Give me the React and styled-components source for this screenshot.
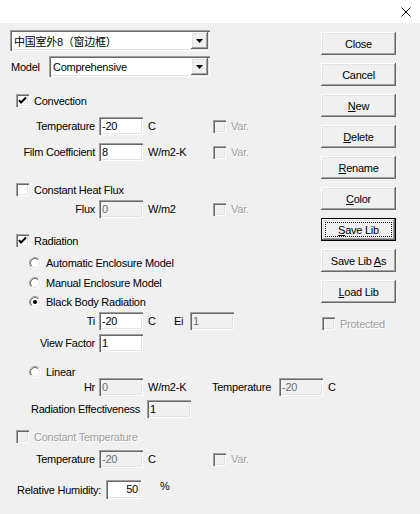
import { useId } from "react";
import styled, { createGlobalStyle } from "styled-components";

const GlobalStyle = createGlobalStyle`
  html, body {
    margin: 0;
    padding: 0;
    background: #f0f0f0;
  }
  body {
    font-family: "Liberation Sans", Arial, "Noto Sans CJK SC", sans-serif;
    font-size: 11px;
    letter-spacing: -0.25px;
    color: #000;
  }
`;

const sunken = `box-shadow: inset 1px 1px #a0a0a0, inset 2px 2px #696969, inset -1px -1px #fff, inset -2px -2px #e3e3e3;`;
const raised = `box-shadow: inset -1px -1px #696969, inset 1px 1px #fff, inset -2px -2px #a0a0a0, inset 2px 2px #e3e3e3;`;

const CheckMark = () => (
  <svg width="9" height="9" viewBox="0 0 9 9">
    <polyline points="1,4 3,6.5 8,1.5" fill="none" stroke="#000" strokeWidth="2" />
  </svg>
);

const Radio = ({ on }) => {
  const id = useId().replace(/:/g, "");
  return (
    <svg width="12" height="12" viewBox="0 0 12 12" style={{ flexShrink: 0 }}>
      <defs>
        <linearGradient id={`o${id}`} x1="0" y1="0" x2="1" y2="1">
          <stop offset="0.5" stopColor="#a0a0a0" />
          <stop offset="0.5" stopColor="#ffffff" />
        </linearGradient>
        <linearGradient id={`i${id}`} x1="0" y1="0" x2="1" y2="1">
          <stop offset="0.5" stopColor="#696969" />
          <stop offset="0.5" stopColor="#e3e3e3" />
        </linearGradient>
      </defs>
      <circle cx="6" cy="6" r="5.5" fill="none" stroke={`url(#o${id})`} strokeWidth="1" />
      <circle cx="6" cy="6" r="4.5" fill="#fff" stroke={`url(#i${id})`} strokeWidth="1" />
      {on && <circle cx="6" cy="6" r="2" fill="#000" />}
    </svg>
  );
};

const Check = ({ on, disabled }) => (
  <Box $disabled={disabled}>{on && <CheckMark />}</Box>
);

const Combo = ({ width, children }) => (
  <ComboBox $width={width}>
    <ComboText>{children}</ComboText>
    <DropBtn>
      <svg width="7" height="4" viewBox="0 0 7 4">
        <polygon points="0,0 7,0 3.5,4" fill="#000" />
      </svg>
    </DropBtn>
  </ComboBox>
);

const Var = ({ top }) => (
  <VarWrap>
    <Check disabled />
    <Dim>Var.</Dim>
  </VarWrap>
);

const App = () => {
  return (
    <Window>
      <GlobalStyle />
      <TitleBar>
        <svg width="10" height="10" viewBox="0 0 10 10">
          <path d="M0.5 0.5 L9.5 9.5 M9.5 0.5 L0.5 9.5" stroke="#000" strokeWidth="1" />
        </svg>
      </TitleBar>
      <Body>
        <Main>
          <Row $mt={7} $h={21} $pl={10}>
            <Combo width={200}>中国室外8（窗边框）</Combo>
          </Row>
          <Row $mt={5} $h={21} $pl={11}>
            <Cell $w={38}>Model</Cell>
            <Combo width={161}>Comprehensive</Combo>
          </Row>

          <Row $mt={17} $h={13} $pl={16}>
            <Check on />
            <Caption>Convection</Caption>
          </Row>
          <Row $mt={10} $h={18}>
            <FieldLabel>Temperature</FieldLabel>
            <Field>-20</Field>
            <Unit>C</Unit>
            <Var />
          </Row>
          <Row $mt={8} $h={18}>
            <FieldLabel>Film Coefficient</FieldLabel>
            <Field>8</Field>
            <Unit>W/m2-K</Unit>
            <Var />
          </Row>

          <Row $mt={22} $h={13} $pl={16}>
            <Check />
            <Caption>Constant Heat Flux</Caption>
          </Row>
          <Row $mt={4} $h={18}>
            <FieldLabel>Flux</FieldLabel>
            <Field $disabled>0</Field>
            <Unit>W/m2</Unit>
            <Var />
          </Row>

          <Row $mt={16} $h={13} $pl={16}>
            <Check on />
            <Caption>Radiation</Caption>
          </Row>
          <Row $mt={9} $h={13} $pl={29}>
            <Radio />
            <Caption>Automatic Enclosure Model</Caption>
          </Row>
          <Row $mt={7} $h={13} $pl={29}>
            <Radio />
            <Caption>Manual Enclosure Model</Caption>
          </Row>
          <Row $mt={6} $h={13} $pl={29}>
            <Radio on />
            <Caption>Black Body Radiation</Caption>
          </Row>
          <Row $mt={4} $h={18}>
            <FieldLabel>Ti</FieldLabel>
            <Field>-20</Field>
            <Unit $w={31}>C</Unit>
            <Cell $w={16}>Ei</Cell>
            <Field $disabled>1</Field>
          </Row>
          <Row $mt={4} $h={18}>
            <FieldLabel>View Factor</FieldLabel>
            <Field>1</Field>
          </Row>

          <Row $mt={13} $h={13} $pl={29}>
            <Radio />
            <Caption>Linear</Caption>
          </Row>
          <Row $mt={0} $h={18}>
            <FieldLabel>Hr</FieldLabel>
            <Field $disabled>0</Field>
            <Unit $w={69}>W/m2-K</Unit>
            <Cell $w={67}>Temperature</Cell>
            <Field $disabled>-20</Field>
            <Unit $w={20}>C</Unit>
          </Row>
          <Row $mt={4} $h={18} $pl={31}>
            <Cell $w={116}>Radiation Effectiveness</Cell>
            <Field $readonly>1</Field>
          </Row>

          <Row $mt={12} $h={13} $pl={16}>
            <Check disabled />
            <Caption $dim>Constant Temperature</Caption>
          </Row>
          <Row $mt={7} $h={18}>
            <FieldLabel>Temperature</FieldLabel>
            <Field $disabled>-20</Field>
            <Unit>C</Unit>
            <Var />
          </Row>

          <Row $mt={12} $h={19} $pl={17}>
            <Cell $w={89}>Relative Humidity:</Cell>
            <Field $w={35} $h={19} $right>50</Field>
            <Unit $w={30} $pl={19} $up>%</Unit>
          </Row>
        </Main>

        <Side>
          <Button>Close</Button>
          <Button>Cancel</Button>
          <Button><u>N</u>ew</Button>
          <Button><u>D</u>elete</Button>
          <Button><u>R</u>ename</Button>
          <Button><u>C</u>olor</Button>
          <Button $default><u>S</u>ave Lib</Button>
          <Button>Save Lib <u>A</u>s</Button>
          <Button><u>L</u>oad Lib</Button>
          <Row $mt={6} $h={13} $pl={1}>
            <Check disabled />
            <Caption $dim>Protected</Caption>
          </Row>
        </Side>
      </Body>
    </Window>
  );
};

const Window = styled.div`
  width: 420px;
  height: 514px;
  display: flex;
  flex-direction: column;
  overflow: hidden;
  background: #f0f0f0;
`;

const TitleBar = styled.div`
  height: 23px;
  background: #fff;
  display: flex;
  justify-content: flex-end;
  align-items: center;
  padding-right: 9px;
  flex-shrink: 0;
`;

const Body = styled.div`
  display: flex;
`;

const Main = styled.div`
  width: 321px;
  display: flex;
  flex-direction: column;
`;

const Side = styled.div`
  width: 75px;
  display: flex;
  flex-direction: column;
  gap: 8px;
  padding-top: 9px;
`;

const Row = styled.div`
  display: flex;
  align-items: center;
  height: ${({ $h }) => $h}px;
  margin-top: ${({ $mt }) => $mt}px;
  padding-left: ${({ $pl }) => $pl || 0}px;
  white-space: nowrap;
`;

const Cell = styled.span`
  width: ${({ $w }) => $w}px;
  flex-shrink: 0;
`;

const FieldLabel = styled.span`
  width: 99px;
  padding-right: 4px;
  box-sizing: border-box;
  text-align: right;
  flex-shrink: 0;
`;

const Unit = styled.span`
  width: ${({ $w }) => $w || 70}px;
  padding-left: ${({ $pl }) => $pl ?? 5}px;
  box-sizing: border-box;
  flex-shrink: 0;
  position: relative;
  top: ${({ $up }) => ($up ? -4 : 0)}px;
`;

const Caption = styled.span`
  margin-left: 5px;
  color: ${({ $dim }) => ($dim ? "#a0a0a0" : "#000")};
  text-shadow: ${({ $dim }) => ($dim ? "1px 1px 0 #fff" : "none")};
`;

const Dim = styled.span`
  margin-left: 5px;
  color: #a0a0a0;
  text-shadow: 1px 1px 0 #fff;
`;

const VarWrap = styled.span`
  display: flex;
  align-items: center;
`;

const Box = styled.span`
  width: 13px;
  height: 13px;
  box-sizing: border-box;
  flex-shrink: 0;
  display: flex;
  align-items: center;
  justify-content: center;
  background: ${({ $disabled }) => ($disabled ? "#f0f0f0" : "#fff")};
  ${sunken}
`;

const Field = styled.div`
  width: ${({ $w }) => $w || 44}px;
  height: ${({ $h }) => $h || 18}px;
  line-height: ${({ $h }) => $h || 18}px;
  box-sizing: border-box;
  flex-shrink: 0;
  padding: 0 3px;
  text-align: ${({ $right }) => ($right ? "right" : "left")};
  background: ${({ $disabled, $readonly }) => ($disabled || $readonly ? "#f0f0f0" : "#fff")};
  color: ${({ $disabled }) => ($disabled ? "#6d6d6d" : "#000")};
  ${sunken}
`;

const ComboBox = styled.div`
  width: ${({ $width }) => $width}px;
  height: 21px;
  box-sizing: border-box;
  display: flex;
  align-items: center;
  background: #fff;
  padding: 2px 2px 2px 4px;
  ${sunken}
`;

const ComboText = styled.span`
  flex: 1;
  overflow: hidden;
`;

const DropBtn = styled.span`
  width: 17px;
  height: 17px;
  box-sizing: border-box;
  display: flex;
  align-items: center;
  justify-content: center;
  background: #f0f0f0;
  ${raised}
`;

const Button = styled.button`
  position: relative;
  width: 75px;
  height: 23px;
  padding: 0;
  border: none;
  background: #f0f0f0;
  font: inherit;
  letter-spacing: inherit;
  color: #000;
  flex-shrink: 0;
  box-shadow: ${({ $default }) =>
    $default
      ? "inset 0 0 0 1px #000, inset -2px -2px #696969, inset 2px 2px #fff, inset -3px -3px #a0a0a0, inset 3px 3px #e3e3e3"
      : "inset -1px -1px #696969, inset 1px 1px #fff, inset -2px -2px #a0a0a0, inset 2px 2px #e3e3e3"};

  &::after {
    content: "";
    display: ${({ $default }) => ($default ? "block" : "none")};
    position: absolute;
    inset: 4px;
    border: 1px dotted #000;
  }
`;

export default App;
